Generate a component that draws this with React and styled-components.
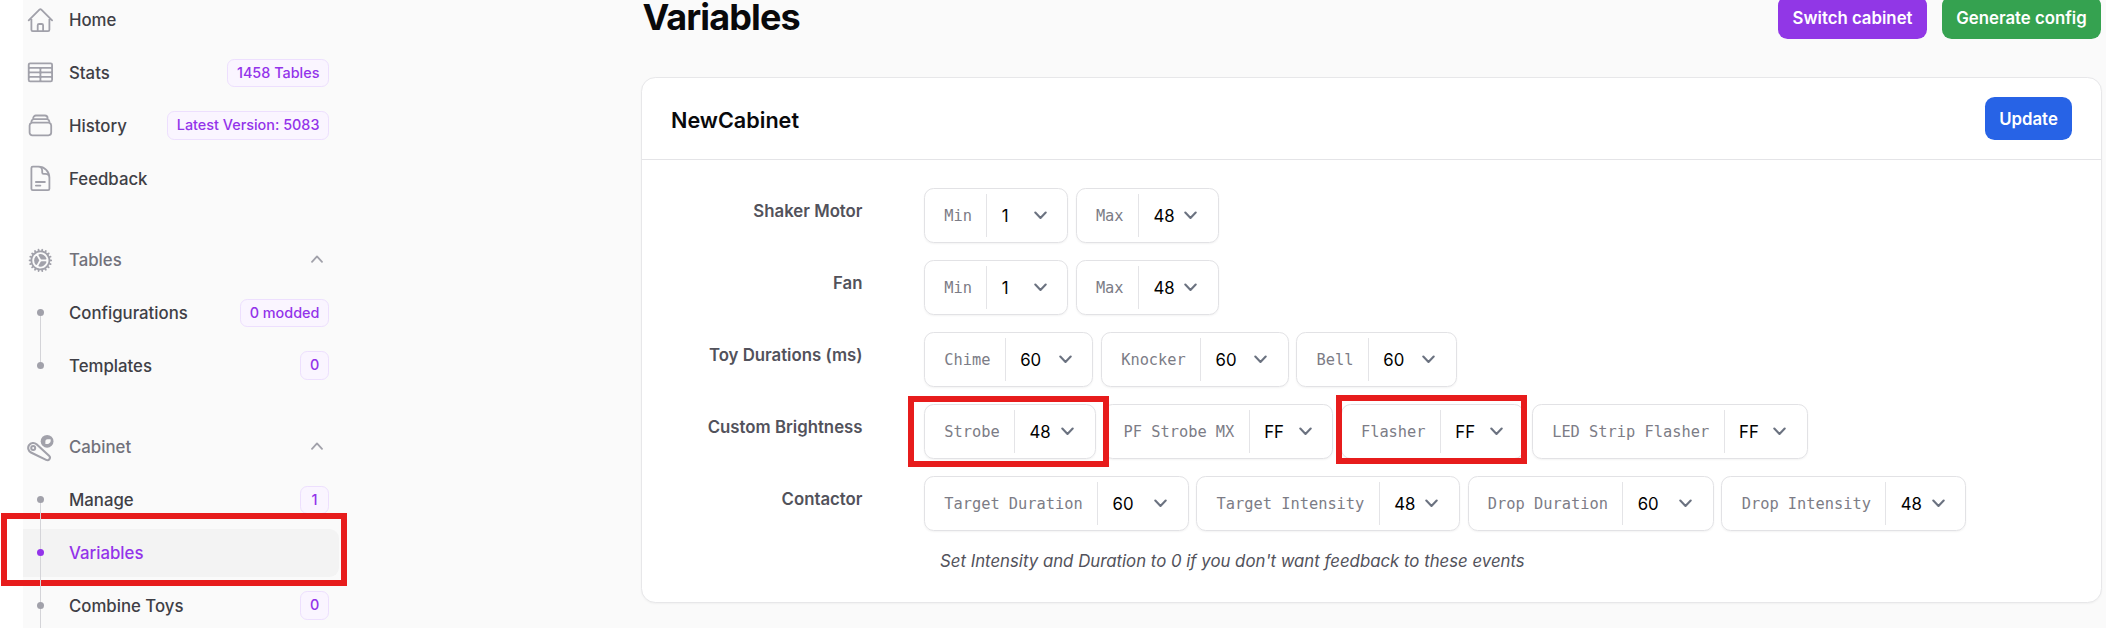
import React from "react";
import styled, { createGlobalStyle, css } from "styled-components";
import {
  HiOutlineHome,
  HiOutlineTableCells,
  HiOutlineRectangleStack,
  HiOutlineDocumentText,
  HiCog,
} from "react-icons/hi2";

const GlobalStyle = createGlobalStyle`
  *, *::before, *::after { box-sizing: border-box; }
  html, body { margin: 0; background: #fff; }
  body { overflow: hidden; font-family: Inter, "Liberation Sans", sans-serif; }
`;

const Page = styled.div`
  position: relative;
  display: flex;
  height: 628px;
  padding-left: 23px;
  overflow: hidden;
  background: #fff;
`;

const Sidebar = styled.nav`
  flex: none;
  display: flex;
  flex-direction: column;
  gap: 33.6px;
  width: 618px;
  height: 640px;
  padding-right: 302px;
  background: #fafafa;
`;

const NavGroup = styled.ul`
  display: flex;
  flex-direction: column;
  gap: 4.8px;
  margin: 0;
  padding: 0;
  list-style: none;

  &:first-child {
    margin-top: -4px;
  }
`;

const NavItem = styled.li`
  display: flex;
  align-items: center;
  height: 48px;
  padding: 0 10px 0 3px;
  border-radius: 0 9.6px 9.6px 0;
  font-size: 16.8px;
  font-weight: 500;
  color: ${(p) => (p.$active ? "#9333ea" : p.$heading ? "#71717a" : "#3f3f46")};
  background: ${(p) => (p.$active ? "#f3f3f3" : "transparent")};
`;

const Marker = styled.span`
  position: relative;
  flex: none;
  display: flex;
  align-items: center;
  justify-content: center;
  width: 28.8px;
  height: 48px;
  margin-right: 14.2px;
  color: #a1a1aa;

  svg {
    width: 28.8px;
    height: 28.8px;
  }
`;

const Dot = styled.span`
  position: relative;
  width: 7px;
  height: 7px;
  border-radius: 50%;
  background: ${(p) => (p.$active ? "#9333ea" : "#a1a1aa")};
  ${(p) =>
    p.$line &&
    css`
      &::before {
        content: "";
        position: absolute;
        z-index: 1;
        left: 3px;
        top: 7px;
        width: 1px;
        height: 46px;
        background: #d4d4d8;
      }
    `}
`;

const NavLabel = styled.span`
  flex: 1;
  padding-top: 0.6px;
  white-space: nowrap;
`;

const Badge = styled.span`
  min-width: 28.8px;
  height: 28.4px;
  padding: 0 8.6px;
  border: 1px solid #eddffe;
  border-radius: 7.2px;
  background: #faf5ff;
  color: #9333ea;
  font-size: 14.4px;
  line-height: 26.4px;
  text-align: center;
  white-space: nowrap;
`;

const Fold = styled.svg`
  width: 12px;
  height: 8px;
  margin-right: 6px;
  margin-bottom: 2px;
`;

const Main = styled.main`
  flex: none;
  width: 1461px;
`;

const Backdrop = styled.div`
  flex: 1;
  display: flex;
  background: #fafafa;
`;

const TitleBar = styled.header`
  display: flex;
  justify-content: space-between;
  height: 77px;
`;

const Title = styled.h1`
  margin: 0 0 0 1.5px;
  font-size: 36px;
  line-height: 34px;
  font-weight: 700;
  letter-spacing: -0.9px;
  color: #09090b;
`;

const Actions = styled.div`
  display: flex;
  gap: 15px;
  margin: -4px 1px 0 0;
`;

const tones = { purple: "#9137e6", green: "#35a250", blue: "#2763e6" };

const Button = styled.button`
  width: ${(p) => p.$width}px;
  height: 43px;
  padding: 0;
  border: 0;
  border-radius: 9.6px;
  background: ${(p) => tones[p.$tone]};
  color: #fff;
  font-family: inherit;
  font-size: 16.8px;
  font-weight: 600;
  white-space: nowrap;
`;

const Card = styled.section`
  height: 526px;
  border: 1px solid #e7e7e9;
  border-radius: 14.4px;
  background: #fff;
  box-shadow: 0 1px 2px rgba(0, 0, 0, 0.04);
`;

const CardHeader = styled.div`
  display: flex;
  align-items: center;
  justify-content: space-between;
  height: 82px;
  padding: 0 29px;
  border-bottom: 1px solid #e4e4e7;
`;

const CardTitle = styled.h2`
  margin: 3px 0 0;
  font-size: 21.6px;
  font-weight: 600;
  color: #09090b;
`;

const Fields = styled.div`
  display: flex;
  flex-direction: column;
  gap: 17px;
  padding-top: 28px;
`;

const FieldRow = styled.div`
  display: flex;
  height: 55px;
`;

const FieldLabel = styled.div`
  flex: none;
  width: 220.5px;
  margin-right: 61.5px;
  padding-top: 13px;
  font-size: 16.8px;
  line-height: 20px;
  font-weight: 600;
  text-align: right;
  color: #52525b;
`;

const Pills = styled.div`
  display: flex;
  gap: 7.6px;
`;

const Pill = styled.div`
  display: flex;
  align-items: center;
  height: 55px;
  padding-left: 19.2px;
  border: 1px solid #e2e2e5;
  border-radius: 9.6px;
  box-shadow: 0 1px 2px rgba(0, 0, 0, 0.05);
`;

const PillName = styled.span`
  padding-right: 14.4px;
  font-family: "DejaVu Sans Mono", monospace;
  font-size: 15.35px;
  white-space: pre;
  color: #7c7c86;
`;

const Select = styled.div`
  display: flex;
  align-items: center;
  justify-content: space-between;
  width: ${(p) => p.$width}px;
  height: 43px;
  padding: 0 20.6px 0 14.4px;
  border-left: 1px solid #e4e4e7;
  font-size: 16.8px;
  color: #000;
`;

const Note = styled.p`
  margin: 0 0 0 298px;
  font-size: 16.8px;
  line-height: 27px;
  font-style: italic;
  color: #52525b;
`;

/* Callout frames drawn over the page. */
const Callout = styled.div`
  position: absolute;
  left: ${(p) => p.$x}px;
  top: ${(p) => p.$y}px;
  width: ${(p) => p.$w}px;
  height: ${(p) => p.$h}px;
  border: 6px solid #e71c1c;
`;

function PinballIcon() {
  return (
    <svg viewBox="0 0 28.8 28.8" fill="none" stroke="currentColor" strokeWidth="2.1">
      <path d="M10.57 11.3A5 5 0 1 0 5 19.49L20.15 26.93A2.6 2.6 0 0 0 23.05 22.68Z" strokeLinejoin="round" />
      <circle cx="7.2" cy="15" r="2" strokeWidth="2" />
      <circle cx="21.1" cy="8.3" r="6.4" fill="currentColor" stroke="none" />
      <path d="M19.4 11V8.3c0-1.300.8-2.100 2.100-2.100h3c.9 2.200-.7 5.400-5.100 4.800Z" fill="#fafafa" stroke="none" />
    </svg>
  );
}

const groups = [
  {
    items: [
      { label: "Home", icon: HiOutlineHome },
      { label: "Stats", icon: HiOutlineTableCells, badge: "1458 Tables" },
      { label: "History", icon: HiOutlineRectangleStack, badge: "Latest Version: 5083" },
      { label: "Feedback", icon: HiOutlineDocumentText },
    ],
  },
  {
    heading: { label: "Tables", icon: HiCog },
    items: [
      { label: "Configurations", badge: "0 modded", line: true },
      { label: "Templates", badge: "0" },
    ],
  },
  {
    heading: { label: "Cabinet", icon: PinballIcon },
    items: [
      { label: "Manage", badge: "1", line: true },
      { label: "Variables", active: true, line: true },
      { label: "Combine Toys", badge: "0", line: true },
    ],
  },
];

const rows = [
  { label: "Shaker Motor", fields: [["Min", "1", 80.8], ["Max", "48", 80]] },
  { label: "Fan", fields: [["Min", "1", 80.8], ["Max", "48", 80]] },
  { label: "Toy Durations (ms)", fields: [["Chime", "60", 87.6], ["Knocker", "60", 87.6], ["Bell", "60", 87.6]] },
  {
    label: "Custom Brightness",
    fields: [["Strobe", "48", 80.7], ["PF Strobe MX", "FF", 83.4], ["Flasher", "FF", 83.4], ["LED Strip Flasher", "FF", 83.4]],
  },
  {
    label: "Contactor",
    fields: [
      ["Target Duration", "60", 90.6],
      ["Target Intensity", "48", 80.3],
      ["Drop Duration", "60", 90.6],
      ["Drop Intensity", "48", 80],
    ],
  },
];

function Item({ label, icon: Icon, badge, active, line, heading }) {
  return (
    <NavItem $active={active} $heading={heading}>
      <Marker>{Icon ? <Icon /> : <Dot $active={active} $line={line} />}</Marker>
      <NavLabel>{label}</NavLabel>
      {badge && <Badge>{badge}</Badge>}
      {heading && (
        <Fold viewBox="0 0 12 8" fill="none" stroke="#a1a1aa" strokeWidth="1.8" strokeLinecap="round" strokeLinejoin="round">
          <path d="M1 6.8 6 1.4l5 5.4" />
        </Fold>
      )}
    </NavItem>
  );
}

function Chevron() {
  return (
    <svg width="13" height="9" viewBox="0 0 13 9" fill="none" stroke="#6b7280" strokeWidth="2.1" strokeLinecap="round" strokeLinejoin="round">
      <path d="M1.3 1.6 6.5 7l5.2-5.4" />
    </svg>
  );
}

export default function App() {
  return (
    <Page>
      <GlobalStyle />
      <Sidebar>
        {groups.map((g, i) => (
          <NavGroup key={i}>
            {g.heading && <Item {...g.heading} heading />}
            {g.items.map((it) => (
              <Item key={it.label} {...it} />
            ))}
          </NavGroup>
        ))}
      </Sidebar>
      <Backdrop>
        <Main>
          <TitleBar>
            <Title>Variables</Title>
            <Actions>
              <Button $tone="purple" $width={149}>Switch cabinet</Button>
              <Button $tone="green" $width={159}>Generate config</Button>
            </Actions>
          </TitleBar>
          <Card>
            <CardHeader>
              <CardTitle>NewCabinet</CardTitle>
              <Button $tone="blue" $width={87}>Update</Button>
            </CardHeader>
            <Fields>
              {rows.map((r) => (
                <FieldRow key={r.label}>
                  <FieldLabel>{r.label}</FieldLabel>
                  <Pills>
                    {r.fields.map(([name, value, width]) => (
                      <Pill key={name}>
                        <PillName>{name}</PillName>
                        <Select $width={width}>
                          {value}
                          <Chevron />
                        </Select>
                      </Pill>
                    ))}
                  </Pills>
                </FieldRow>
              ))}
              <Note>Set Intensity and Duration to 0 if you don't want feedback to these events</Note>
            </Fields>
          </Card>
        </Main>
      </Backdrop>
      <Callout $x={1} $y={513} $w={346} $h={73} />
      <Callout $x={908} $y={396} $w={201} $h={71} />
      <Callout $x={1336} $y={395} $w={191} $h={69} />
    </Page>
  );
}
